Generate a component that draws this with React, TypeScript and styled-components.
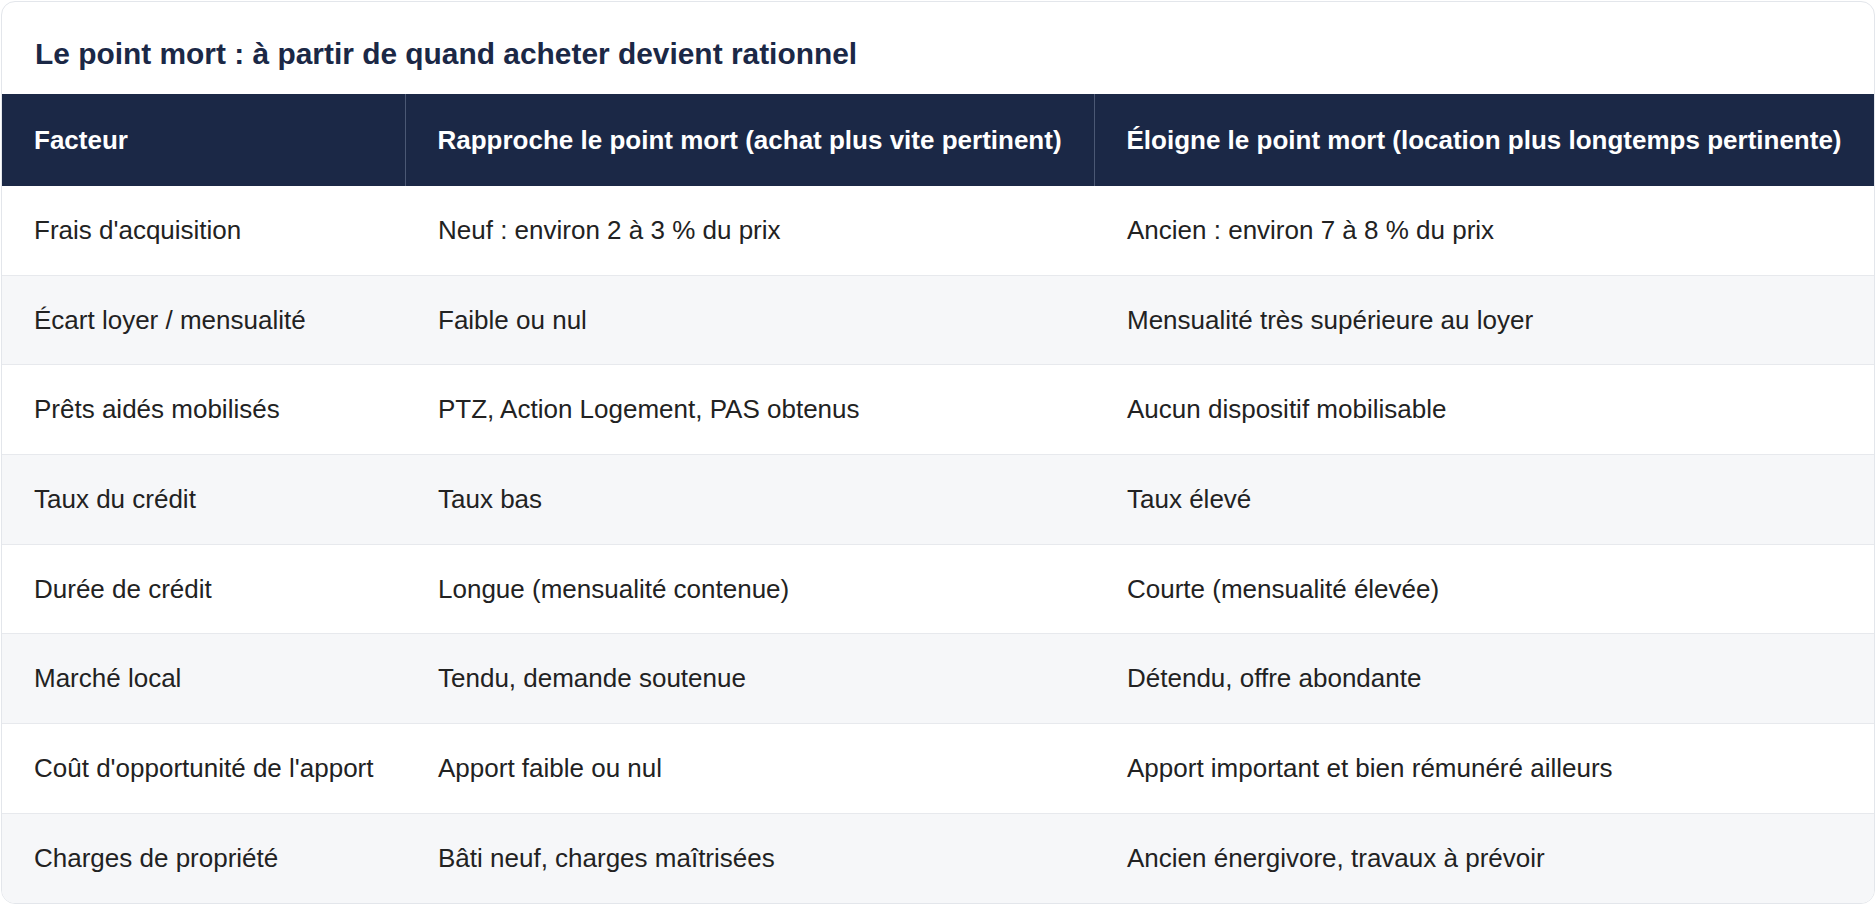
import styled, { createGlobalStyle } from "styled-components";

const GlobalStyle = createGlobalStyle`
  html, body {
    margin: 0;
    padding: 0;
    background: #ffffff;
  }
  body {
    font-family: "Liberation Sans", Arial, Helvetica, sans-serif;
  }
`;

const Page = styled.div`
  padding: 1px;
`;

const Card = styled.section`
  border: 1px solid #e3e6eb;
  border-radius: 14px;
  overflow: hidden;
  background: #ffffff;
`;

const Title = styled.h2`
  margin: 0;
  padding: 35px 33px 23px;
  font-size: 29.9px;
  font-weight: 700;
  line-height: 34px;
  color: #1b2846;
`;

const Table = styled.table`
  width: 100%;
  border-collapse: collapse;
  table-layout: fixed;
  font-size: 26px;
  line-height: 29px;
`;

const HeadCell = styled.th<{ $divider?: boolean }>`
  background: #1b2846;
  color: #ffffff;
  font-weight: 700;
  text-align: left;
  padding: 31.5px 32px;
  white-space: nowrap;
  border-left: ${(p) => (p.$divider ? "1px solid #4b5874" : "none")};
`;

const Row = styled.tr<{ $striped?: boolean }>`
  background: ${(p) => (p.$striped ? "#f6f7f9" : "#ffffff")};
  border-top: 1px solid #e7e9ed;

  &:first-child {
    border-top: none;
  }
`;

const Cell = styled.td<{ $shift?: boolean }>`
  padding: 29.85px 32px 29.85px ${(p) => (p.$shift ? "33px" : "32px")};
  color: #222222;
  white-space: nowrap;
`;

const rows = [
  ["Frais d'acquisition", "Neuf : environ 2 à 3 % du prix", "Ancien : environ 7 à 8 % du prix"],
  ["Écart loyer / mensualité", "Faible ou nul", "Mensualité très supérieure au loyer"],
  ["Prêts aidés mobilisés", "PTZ, Action Logement, PAS obtenus", "Aucun dispositif mobilisable"],
  ["Taux du crédit", "Taux bas", "Taux élevé"],
  ["Durée de crédit", "Longue (mensualité contenue)", "Courte (mensualité élevée)"],
  ["Marché local", "Tendu, demande soutenue", "Détendu, offre abondante"],
  ["Coût d'opportunité de l'apport", "Apport faible ou nul", "Apport important et bien rémunéré ailleurs"],
  ["Charges de propriété", "Bâti neuf, charges maîtrisées", "Ancien énergivore, travaux à prévoir"],
];

export default function App() {
  return (
    <Page>
      <GlobalStyle />
      <Card>
        <Title>Le point mort : à partir de quand acheter devient rationnel</Title>
        <Table>
          <colgroup>
            <col style={{ width: 403 }} />
            <col style={{ width: 689 }} />
            <col />
          </colgroup>
          <thead>
            <tr>
              <HeadCell>Facteur</HeadCell>
              <HeadCell $divider>Rapproche le point mort (achat plus vite pertinent)</HeadCell>
              <HeadCell $divider>Éloigne le point mort (location plus longtemps pertinente)</HeadCell>
            </tr>
          </thead>
          <tbody>
            {rows.map((r, i) => (
              <Row key={r[0]} $striped={i % 2 === 1}>
                <Cell>{r[0]}</Cell>
                <Cell $shift>{r[1]}</Cell>
                <Cell $shift>{r[2]}</Cell>
              </Row>
            ))}
          </tbody>
        </Table>
      </Card>
    </Page>
  );
}
